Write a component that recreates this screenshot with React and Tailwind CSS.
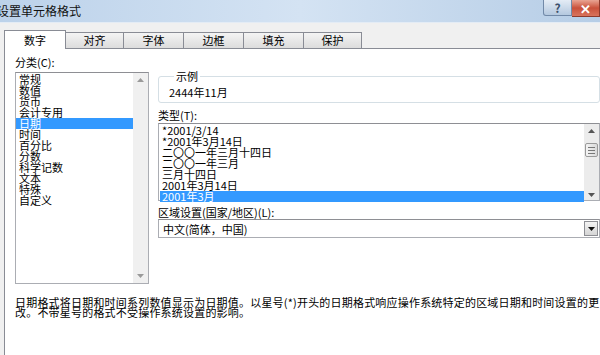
import React from "react";

const categories = [
  "常规",
  "数值",
  "货币",
  "会计专用",
  "日期",
  "时间",
  "百分比",
  "分数",
  "科学记数",
  "文本",
  "特殊",
  "自定义",
];

const dateTypes = [
  "*2001/3/14",
  "*2001年3月14日",
  "二〇〇一年三月十四日",
  "二〇〇一年三月",
  "三月十四日",
  "2001年3月14日",
  "2001年3月",
];

const tabs = [
  { label: "对齐", w: "w-[58px]" },
  { label: "字体", w: "w-[60px]" },
  { label: "边框", w: "w-[60px]" },
  { label: "填充", w: "w-[60px]" },
  { label: "保护", w: "w-[58px]" },
];

const ArrowUp = ({ color = "#9a9a9a" }) => (
  <svg width="7" height="4" viewBox="0 0 7 4">
    <path d="M3.5 0 L7 4 L0 4 Z" fill={color} />
  </svg>
);

const ArrowDown = ({ color = "#9a9a9a" }) => (
  <svg width="7" height="4" viewBox="0 0 7 4">
    <path d="M0 0 L7 0 L3.5 4 Z" fill={color} />
  </svg>
);

const App = () => {
  return (
    <div
      className="flex h-[355px] w-[600px] flex-col overflow-hidden bg-[#f0f0f0] text-[11px] text-black"
      style={{ fontFamily: '"Noto Sans CJK SC", "Noto Sans", sans-serif' }}
    >
      {/* title bar */}
      <div className="flex h-[23px] items-start justify-between border-b border-[#e4ecf5] bg-gradient-to-r from-[#bcd2ea] via-[#d4e3f3] to-[#b6cde6]">
        <div className="-ml-[3px] pt-[3px] text-[12px] leading-[16px] text-[#111]">
          设置单元格格式
        </div>
        <div className="flex">
          <div className="flex h-[16px] w-[29px] items-center justify-center rounded-bl-[3px] border border-t-0 border-[#7189a8] bg-gradient-to-b from-[#e4ecf5] to-[#b4c8df] text-[12px] font-bold leading-none text-[#3b4f6b]">
            ?
          </div>
          <div className="flex h-[17px] w-[28px] items-center justify-center border border-l-0 border-t-0 border-[#8d3a2c] bg-gradient-to-b from-[#e8a493] via-[#c9503a] to-[#d8735c] text-[13px] font-bold leading-none text-white">
            ✕
          </div>
        </div>
      </div>

      {/* tab strip */}
      <div className="flex h-[25px] items-end pl-[4px]">
        <div className="relative z-10 -mb-px flex h-[19px] w-[62px] items-center justify-center border border-b-0 border-[#898c95] bg-white leading-none">
          数字
        </div>
        {tabs.map((t) => (
          <div
            key={t.label}
            className={`flex h-[16px] ${t.w} items-center justify-center border border-b-0 border-l-0 border-[#898c95] bg-gradient-to-b from-[#f4f4f4] to-[#dcdcdc] leading-none`}
          >
            {t.label}
          </div>
        ))}
      </div>

      {/* content */}
      <div className="ml-[4px] flex flex-1 flex-col border-l border-t border-[#898c95] bg-white pt-[4px]">
        <div className="flex">
          {/* left column */}
          <div className="ml-[10px] w-[134px]">
            <div className="h-[19px] leading-[19px]">分类(C):</div>
            <div className="flex h-[212px] border border-[#abadb3] border-t-[#8e8f94]">
              <div className="flex-1 pt-[1px]">
                {categories.map((c) => (
                  <div
                    key={c}
                    className={`h-[11px] pl-[3px] leading-[11px] ${
                      c === "日期" ? "bg-[#3399ff] text-white" : ""
                    }`}
                  >
                    {c}
                  </div>
                ))}
              </div>
              <div className="flex w-[15px] flex-col items-center justify-between bg-[#f0f0f0] py-[5px]">
                <ArrowUp />
                <ArrowDown />
              </div>
            </div>
          </div>

          {/* right column */}
          <div className="ml-[9px] w-[442px]">
            <fieldset className="mt-[17px] h-[33px] rounded-[3px] border border-[#d5dfe5] pl-[10px]">
              <legend className="ml-[5px] px-[2px] text-[11px] leading-[12px]">
                示例
              </legend>
              <div className="pt-[4px] leading-[12px]">2444年11月</div>
            </fieldset>

            <div className="mt-[6px] leading-[13px]">类型(T):</div>
            <div className="mt-[1px] flex h-[78px] border border-[#abadb3] border-t-[#8e8f94]">
              <div className="flex-1 pl-[1px] pt-[1px]">
                {dateTypes.map((d, i) => (
                  <div
                    key={d}
                    className={`h-[11px] pl-[2px] leading-[11px] ${
                      i === dateTypes.length - 1 ? "bg-[#3399ff] text-white" : ""
                    }`}
                  >
                    {d}
                  </div>
                ))}
              </div>
              <div className="flex w-[15px] flex-col items-center bg-[#ececec] pb-[3px] pt-[5px]">
                <ArrowUp color="#555" />
                <div className="mt-[10px] flex h-[14px] w-[13px] flex-col items-center justify-center gap-[2px] rounded-[2px] border border-[#9a9a9a] bg-gradient-to-r from-[#f4f4f4] to-[#dadada]">
                  <div className="h-px w-[7px] bg-[#777]" />
                  <div className="h-px w-[7px] bg-[#777]" />
                  <div className="h-px w-[7px] bg-[#777]" />
                </div>
                <div className="flex-1" />
                <ArrowDown color="#555" />
              </div>
            </div>

            <div className="pt-[5px] leading-[13px]">区域设置(国家/地区)(L):</div>
            <div className="flex h-[19px] items-center border border-[#abadb3] border-t-[#8e8f94] pl-[4px]">
              <div className="flex-1 leading-[12px]">中文(简体，中国)</div>
              <div className="mr-[1px] flex h-[15px] w-[14px] items-center justify-center border border-[#8e8f94] bg-gradient-to-b from-[#f4f4f4] to-[#d5d5d5]">
                <ArrowDown color="#111" />
              </div>
            </div>
          </div>
        </div>

        <div className="ml-[10px] mt-[13px] whitespace-nowrap leading-[10px] tracking-[0.2px]">
          <div>
            日期格式将日期和时间系列数值显示为日期值。以星号(*)开头的日期格式响应操作系统特定的区域日期和时间设置的更
          </div>
          <div>改。不带星号的格式不受操作系统设置的影响。</div>
        </div>
      </div>
    </div>
  );
};

export default App;
